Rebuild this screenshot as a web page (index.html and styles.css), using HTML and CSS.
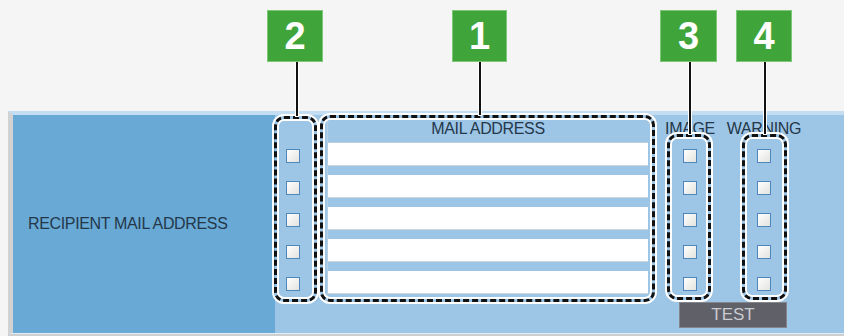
FILE: index.html
```html
<!DOCTYPE html>
<html lang="en">

<head>
    <meta charset="UTF-8">
    <meta name="viewport" content="width=device-width, initial-scale=1.0">
    <title>Recipient Mail Address</title>
    <link rel="stylesheet" href="styles.css">
</head>

<body>
    <div class="page">
        <div class="panel">
            <div class="label-cell">RECIPIENT MAIL ADDRESS</div>
            <div class="settings">
                <div class="cols">
                    <div class="col col-select">
                        <div class="col-head"></div>
                        <div class="cell"><span class="check"></span></div>
                        <div class="cell"><span class="check"></span></div>
                        <div class="cell"><span class="check"></span></div>
                        <div class="cell"><span class="check"></span></div>
                        <div class="cell"><span class="check"></span></div>
                    </div>
                    <div class="col col-mail">
                        <div class="col-head"><span class="mail-head">MAIL ADDRESS</span></div>
                        <div class="cell"><div class="field"></div></div>
                        <div class="cell"><div class="field"></div></div>
                        <div class="cell"><div class="field"></div></div>
                        <div class="cell"><div class="field"></div></div>
                        <div class="cell"><div class="field"></div></div>
                    </div>
                    <div class="col col-image">
                        <div class="col-head">IMAGE</div>
                        <div class="cell"><span class="check"></span></div>
                        <div class="cell"><span class="check"></span></div>
                        <div class="cell"><span class="check"></span></div>
                        <div class="cell"><span class="check"></span></div>
                        <div class="cell"><span class="check"></span></div>
                    </div>
                    <div class="col col-warning">
                        <div class="col-head">WARNING</div>
                        <div class="cell"><span class="check"></span></div>
                        <div class="cell"><span class="check"></span></div>
                        <div class="cell"><span class="check"></span></div>
                        <div class="cell"><span class="check"></span></div>
                        <div class="cell"><span class="check"></span></div>
                    </div>
                </div>
                <button class="test">TEST</button>
            </div>
        </div>
        <div class="panel-foot"></div>

        <!-- callouts over the panel -->
        <div class="callout-box box-select"></div>
        <div class="callout-box box-mail"></div>
        <div class="callout-box box-image"></div>
        <div class="callout-box box-warning"></div>

        <div class="callout-line line-select"></div>
        <div class="callout-line line-mail"></div>
        <div class="callout-line line-image"></div>
        <div class="callout-line line-warning"></div>

        <div class="tag tag-select">2</div>
        <div class="tag tag-mail">1</div>
        <div class="tag tag-image">3</div>
        <div class="tag tag-warning">4</div>
    </div>
</body>

</html>
```

FILE: styles.css
```css
body {
    margin: 0;
    background-color: #f5f5f5;
    font-family: "Liberation Sans", Arial, sans-serif;
    color: #24384a;
}

.page {
    position: relative;
    width: 844px;
    height: 336px;
    overflow: hidden;
    padding-top: 111px;
    box-sizing: border-box;
}

.panel {
    display: flex;
    height: 218px;
    margin-left: 8px;
    border-left: 5px solid #d2d2d2;
    border-top: 4px solid #c3def2;
    border-bottom: 1px solid #e2edf5;
}

.panel-foot {
    height: 3px;
    margin-left: 8px;
    background-color: #cdcfd1;
}

.label-cell {
    width: 262px;
    display: flex;
    align-items: center;
    padding-left: 15px;
    box-sizing: border-box;
    background-color: #69a9d5;
    font-size: 16px;
    letter-spacing: -0.35px;
}

.settings {
    flex: 1;
    background-color: #9dc5e6;
}

.cols {
    display: flex;
}

.col-head {
    height: 28px;
    line-height: 27px;
    font-size: 16px;
    text-align: center;
    letter-spacing: -0.35px;
    box-sizing: border-box;
    white-space: nowrap;
}

.cell {
    height: 32px;
    padding-top: 6px;
    box-sizing: border-box;
}

.check {
    display: block;
    width: 12px;
    height: 12px;
    border: 1px solid #4f86bd;
    background: linear-gradient(135deg, #ffffff, #e2e2de);
}

.col-select {
    width: 52px;
}

.col-select .check {
    margin-left: 11px;
}

.col-mail {
    width: 321px;
}

.col-mail .col-head {
    padding-top: 5px;
}

.mail-head {
    display: block;
    height: 23px;
    line-height: 18px;
    border-bottom: 1px solid #b9cfe0;
    border-left: 1px solid #b9cfe0;
    box-sizing: border-box;
}

.col-mail .cell {
    padding-top: 0;
    background-color: #9dc5e6;
    border-left: 1px solid #b9cfe0;
}

.field {
    height: 23px;
    background-color: #fff;
    border-bottom: 1px solid #c9d6e0;
    box-sizing: border-box;
}

.col-image {
    width: 60px;
    margin-left: 12px;
}

.col-warning {
    width: 60px;
    margin-left: 14px;
}

.col-warning .col-head {
    margin: 0 -20px;
}

.col-image .check,
.col-warning .check {
    margin-left: 23px;
}

.test {
    display: block;
    width: 108px;
    height: 26px;
    margin: -1px 0 0 404px;
    padding: 0;
    border: 1px solid #85868c;
    background-color: #5f6068;
    color: #c9ccd0;
    font-family: "Liberation Sans", Arial, sans-serif;
    font-size: 17px;
}

.callout-box {
    position: absolute;
    box-sizing: border-box;
    border: 3px dashed #111;
    border-radius: 10px;
    box-shadow: 0 0 0 2px #fff, inset 0 0 0 2px #fff;
}

.box-select {
    left: 274px;
    top: 116px;
    width: 43px;
    height: 186px;
}

.box-mail {
    left: 320px;
    top: 115px;
    width: 335px;
    height: 187px;
}

.box-image {
    left: 667px;
    top: 134px;
    width: 44px;
    height: 166px;
}

.box-warning {
    left: 742px;
    top: 134px;
    width: 45px;
    height: 166px;
}

.callout-line {
    position: absolute;
    top: 62px;
    width: 2px;
    background-color: #111;
    box-shadow: 0 0 0 1px #fff;
}

.line-select {
    left: 296px;
    height: 54px;
}

.line-mail {
    left: 479px;
    height: 53px;
}

.line-image {
    left: 689px;
    height: 72px;
}

.line-warning {
    left: 764px;
    height: 72px;
}

.tag {
    position: absolute;
    top: 10px;
    width: 56px;
    height: 52px;
    box-sizing: border-box;
    border: 1px solid #7cc876;
    background-color: #3fa53a;
    color: #fff;
    font-size: 38px;
    font-weight: bold;
    line-height: 50px;
    text-align: center;
}

.tag-select {
    left: 267px;
}

.tag-mail {
    left: 452px;
    width: 55px;
}

.tag-image {
    left: 660px;
    width: 57px;
}

.tag-warning {
    left: 736px;
}
```
